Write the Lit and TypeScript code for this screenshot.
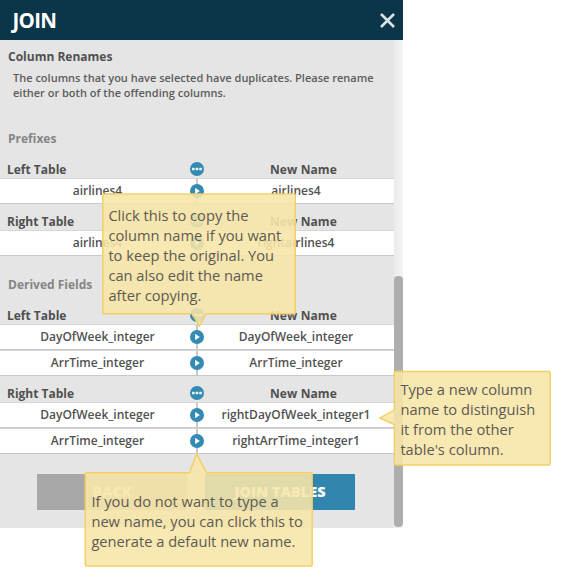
import { LitElement, html, svg, css } from "lit";
import { customElement, property } from "lit/decorators.js";

type Row = [string, string];

@customElement("rename-table")
class RenameTable extends LitElement {
  @property() heading = "";
  @property({ attribute: false }) rows: Row[] = [];

  static styles = css`
    :host { display: block; }
    .head, .row { display: grid; grid-template-columns: 190px 14px 190px; height: 26px; box-sizing: border-box; }
    .head { font-weight: 700; font-size: 12px; line-height: 16px; padding-top: 10px; color: #505050; }
    .head .title { padding-left: 7px; }
    .head .new { padding-left: 66px; letter-spacing: 0.1px; }
    .row {
      background: #fff; border-top: 1px solid #d6d6d6; border-bottom: 1px solid #c9c9c9;
      font-size: 12px; font-weight: 600; line-height: 24px; color: #525252; text-align: center;
    }
    .from { padding-left: 5px; }
    .to { padding-right: 6px; }
    .mark { display: flex; align-items: center; justify-content: center; }
    .head .mark { height: 14px; }
    .row .mark { background: linear-gradient(#c8c8c8, #c8c8c8) center / 2px 100% no-repeat; }
    svg { display: block; }
  `;

  private disc(glyph: unknown) {
    return html`<svg width="14" height="14" viewBox="0 0 14 14"><circle cx="7" cy="7" r="7" fill="#338ab3"/>${glyph}</svg>`;
  }

  render() {
    return html`
      <div class="head">
        <span class="title">${this.heading}</span>
        <span class="mark">${this.disc(svg`<g fill="#e9f3f7"><rect x="2" y="5.8" width="2.7" height="2.5" rx=".6"/><rect x="5.6" y="5.8" width="2.7" height="2.5" rx=".6"/><rect x="9.2" y="5.8" width="2.7" height="2.5" rx=".6"/></g>`)}</span>
        <span class="new">New Name</span>
      </div>
      ${this.rows.map(([from, to]) => html`
        <div class="row">
          <span class="from">${from}</span>
          <span class="mark">${this.disc(svg`<path d="M5.1 3.8 L9.8 7 L5.1 10.2 Z" fill="#fff"/>`)}</span>
          <span class="to">${to}</span>
        </div>`)}
    `;
  }
}

@customElement("hint-callout")
class HintCallout extends LitElement {
  @property({ type: Number }) width = 0;
  @property({ type: Number }) height = 0;
  @property() outline = "";
  @property({ attribute: false }) lines: string[] = [];

  static styles = css`
    :host { display: block; position: absolute; }
    svg { display: block; overflow: visible; }
    path { fill: rgba(247, 229, 169, 0.89); stroke: #f3cf63; stroke-width: 1.4; stroke-linejoin: round; }
    .text {
      position: absolute; left: 6.4px; top: var(--text-top); white-space: nowrap;
      font-size: 14.67px; line-height: 20px; color: #5d5a52;
    }
  `;

  render() {
    return html`
      <svg width=${this.width} height=${this.height}><path d=${this.outline}/></svg>
      <div class="text">${this.lines.map((l) => html`<div>${l}</div>`)}</div>
    `;
  }
}

@customElement("app-root")
class AppRoot extends LitElement {
  static styles = css`
    :host {
      display: block; position: relative; width: 563px; height: 578px; overflow: hidden;
      background: #fff; font-family: "Open Sans", "Noto Sans", sans-serif; color: #505050;
    }
    .dialog { width: 403px; height: 528px; display: flex; flex-direction: column; }
    header {
      height: 40px; box-sizing: border-box; background: #0b3549; color: #fff; display: flex;
      align-items: center; justify-content: space-between; padding: 0 8px 0 12.5px;
    }
    h1 { margin: 0; font-size: 20.5px; font-weight: 700; line-height: 40px; letter-spacing: -0.7px; }
    .scroller { display: flex; height: 488px; }
    .body { width: 394px; background: #e5e5e5; display: flex; flex-direction: column; }
    .track { width: 9px; background: linear-gradient(90deg, #ebebeb, #f4f4f4); display: flex; flex-direction: column; justify-content: flex-end; }
    .thumb { height: 251px; margin-bottom: 1px; background: #aeaeae; border-radius: 4px; }
    h2 { margin: 0; padding-left: 8px; font-size: 12px; font-weight: 700; line-height: 16px; }
    .first { padding-top: 9px; }
    .intro { margin: 5px 0 0; padding-left: 13px; height: 30px; font-size: 11px; line-height: 15px; font-weight: 600; color: #5c5c5c; white-space: nowrap; }
    .group { color: #858585; }
    .prefixes { margin: 31px 0 5px; }
    .derived { margin: 21px 0 5px; }
    .buttons { display: flex; gap: 18px; padding: 20px 0 0 37px; }
    .button { width: 150px; height: 36px; line-height: 36px; text-align: center; color: #fff; background: #a8a8a8; font-weight: 800; font-size: 14.5px; }
    .primary { background: #3086ae; }
    .copy { left: 102px; top: 193px; --text-top: 12px; }
    .type { left: 394px; top: 371px; --text-top: 8px; }
    .generate { left: 85px; top: 472px; --text-top: 19px; }
  `;

  render() {
    return html`
      <div class="dialog">
        <header>
          <h1>JOIN</h1>
          <svg width="15" height="15" viewBox="0 0 15 15"><path d="M1 1 L14 14 M14 1 L1 14" stroke="#dce3e7" stroke-width="2.6" fill="none"/></svg>
        </header>
        <div class="scroller">
          <div class="body">
            <h2 class="first">Column Renames</h2>
            <p class="intro">The columns that you have selected have duplicates. Please rename<br>either or both of the offending columns.</p>
            <h2 class="group prefixes">Prefixes</h2>
            <rename-table heading="Left Table" .rows=${[["airlines4", "airlines4"]]}></rename-table>
            <rename-table heading="Right Table" .rows=${[["airlines4", "rightairlines4"]]}></rename-table>
            <h2 class="group derived">Derived Fields</h2>
            <rename-table heading="Left Table" .rows=${[["DayOfWeek_integer", "DayOfWeek_integer"], ["ArrTime_integer", "ArrTime_integer"]]}></rename-table>
            <rename-table heading="Right Table" .rows=${[["DayOfWeek_integer", "rightDayOfWeek_integer1"], ["ArrTime_integer", "rightArrTime_integer1"]]}></rename-table>
            <div class="buttons">
              <div class="button">BACK</div>
              <div class="button primary">JOIN TABLES</div>
            </div>
          </div>
          <div class="track"><div class="thumb"></div></div>
        </div>
      </div>
      <hint-callout class="copy" width="194" height="121"
        outline="M2 .9 H192 Q193.3 .9 193.3 2 V119.5 Q193.3 120.7 192 120.7 H104 L97.3 133.2 L90 120.7 H2 Q.8 120.7 .8 119.5 V2 Q.8 .9 2 .9 Z"
        .lines=${["Click this to copy the", "column name if you want", "to keep the original. You", "can also edit the name", "after copying."]}></hint-callout>
      <hint-callout class="type" width="157" height="95"
        outline="M1.5 .5 H155 Q156.2 .5 156.2 1.5 V93 Q156.2 94 155 94 H1.5 Q.3 94 .3 93 V53.5 L-14.3 47 L.3 39 V1.5 Q.3 .5 1.5 .5 Z"
        .lines=${["Type a new column", "name to distinguish", "it from the other", "table's column."]}></hint-callout>
      <hint-callout class="generate" width="228" height="95"
        outline="M1.5 .8 H104.5 L111.7 -18.2 L121.8 .8 H226 Q227.2 .8 227.2 2 V92.8 Q227.2 94 226 94 H1.5 Q.3 94 .3 92.8 V2 Q.3 .8 1.5 .8 Z"
        .lines=${["If you do not want to type a", "new name, you can click this to", "generate a default new name."]}></hint-callout>
    `;
  }
}
